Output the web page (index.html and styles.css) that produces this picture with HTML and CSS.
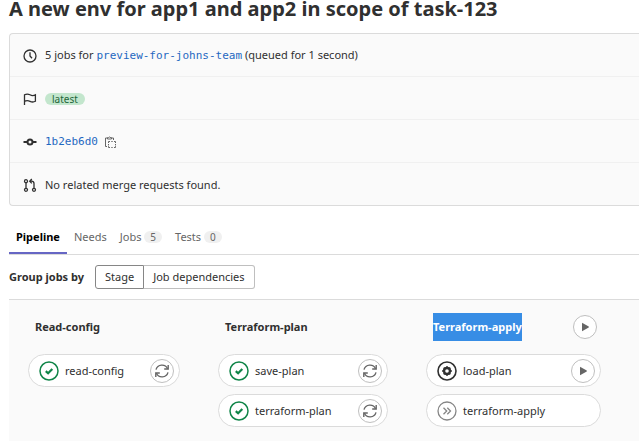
FILE: index.html
```html
<!DOCTYPE html>
<html lang="en">
<head>
  <meta charset="UTF-8">
  <meta name="viewport" content="width=device-width, initial-scale=1.0">
  <title>A new env for app1 and app2 in scope of task-123</title>
  <link rel="stylesheet" href="styles.css">
</head>
<body>
  <svg class="sprite" aria-hidden="true">
    <symbol id="check" viewBox="0 0 20 20">
      <circle cx="10" cy="10" r="9" fill="none" stroke="currentColor" stroke-width="1.5"/>
      <path d="M6.8 10.1l2.3 2.2 4.2-4.400" fill="none" stroke="currentColor" stroke-width="2.200"/>
    </symbol>
    <symbol id="manual" viewBox="0 0 20 20">
      <circle cx="10" cy="10" r="9" fill="none" stroke="currentColor" stroke-width="1.6"/>
      <circle cx="10" cy="10" r="3" fill="none" stroke="currentColor" stroke-width="2.4"/>
      <path d="M10 5.3v9.4M5.3 10h9.4M6.7 6.7l6.6 6.6M13.3 6.7l-6.6 6.6" stroke="currentColor" stroke-width="1.8"/>
      <circle cx="10" cy="10" r="1.8" fill="#fff"/>
    </symbol>
    <symbol id="skipped" viewBox="0 0 20 20">
      <circle cx="10" cy="10" r="9" fill="none" stroke="currentColor" stroke-width="1.3"/>
      <path d="M6.5 6.8l3.2 3.2-3.2 3.2M10.3 6.8l3.2 3.2-3.2 3.2" fill="none" stroke="currentColor" stroke-width="1.3"/>
    </symbol>
    <symbol id="retry" viewBox="0 0 14 14">
      <path d="M1 5.600A6.200 6.200 0 0 1 12.600 4.700M13 8.400A6.200 6.200 0 0 1 1.400 9.300" fill="none" stroke="currentColor" stroke-width="1.4"/>
      <path d="M13.200 1v4H9.200M.8 13V9h4" fill="none" stroke="currentColor" stroke-width="1.4"/>
    </symbol>
    <symbol id="play" viewBox="0 0 14 14">
      <path d="M4 3.200v7.600q0 .5.5.3l6.200-3.700q.5-.4 0-.8L4.500 2.900q-.5-.2-.5.3z" fill="currentColor"/>
    </symbol>
  </svg>

  <h1 class="title">A new env for app1 and app2 in scope of task-123</h1>

  <div class="info-box">
    <div class="info-row">
      <svg class="icon" viewBox="0 0 14 14"><circle cx="7" cy="7" r="6"/><path d="M7 3.200V7l2 2.300"/></svg>
      <span>5 jobs for <a class="mono" href="#">preview-for-johns-team</a> (queued for 1 second)</span>
    </div>
    <div class="info-row">
      <svg class="icon" viewBox="0 0 14 14"><path d="M1.500 13V2.800Q4.300 1.300 7 2.800T12.400 2.800V9.300Q9.800 10.700 7 9.300T1.500 9.300"/></svg>
      <span class="label">latest</span>
    </div>
    <div class="info-row">
      <svg class="icon thick" viewBox="0 0 14 14"><circle cx="7" cy="7" r="2.500"/><path d="M.5 7h4M9.500 7h4"/></svg>
      <a class="mono" href="#">1b2eb6d0</a>
      <button class="copy" type="button" aria-label="Copy commit SHA">
        <svg viewBox="0 0 12 12"><path d="M3 10.500H1.500V2H3M8 2h1.500v2M3.500 3V1.500h1q.8-1.200 1.600 0h1.400V3z"/><path d="M4.500 7V5.500H6M7.300 5.500h1.400M10 5.500h1.500V7M11.500 8v1.400M11.500 10.200v1.300H10M8.700 11.500H7.300M6 11.500H4.500v-1.300M4.500 9.400V8"/></svg>
      </button>
    </div>
    <div class="info-row">
      <svg class="icon" viewBox="0 0 14 14"><circle cx="3" cy="3.200" r="1.500"/><circle cx="3" cy="11.800" r="1.500"/><circle cx="11" cy="11.800" r="1.500"/><path d="M3 4.700v5.600M11 10.300V5.500Q11 3.200 8.500 3.200H7M8.800 1L6.700 3.200l2.100 2.200"/></svg>
      <span>No related merge requests found.</span>
    </div>
  </div>

  <nav class="tabs">
    <a class="tab active" href="#">Pipeline</a>
    <a class="tab" href="#">Needs</a>
    <a class="tab" href="#">Jobs <span class="badge">5</span></a>
    <a class="tab" href="#">Tests <span class="badge">0</span></a>
  </nav>

  <div class="group-by">
    <strong>Group jobs by</strong>
    <div class="btn-group">
      <button class="btn selected" type="button">Stage</button>
      <button class="btn" type="button">Job dependencies</button>
    </div>
  </div>

  <div class="graph">
    <section class="stage">
      <div class="stage-header"><h2>Read-config</h2></div>
      <div class="job">
        <svg class="status success"><use href="#check"/></svg>
        <span class="job-name">read-config</span>
        <button class="action" type="button" aria-label="Retry"><svg><use href="#retry"/></svg></button>
      </div>
    </section>
    <section class="stage">
      <div class="stage-header"><h2>Terraform-plan</h2></div>
      <div class="job">
        <svg class="status success"><use href="#check"/></svg>
        <span class="job-name">save-plan</span>
        <button class="action" type="button" aria-label="Retry"><svg><use href="#retry"/></svg></button>
      </div>
      <div class="job">
        <svg class="status success"><use href="#check"/></svg>
        <span class="job-name">terraform-plan</span>
        <button class="action" type="button" aria-label="Retry"><svg><use href="#retry"/></svg></button>
      </div>
    </section>
    <section class="stage">
      <div class="stage-header">
        <h2 class="highlight">Terraform-apply</h2>
        <button class="action" type="button" aria-label="Run all"><svg><use href="#play"/></svg></button>
      </div>
      <div class="job">
        <svg class="status manual"><use href="#manual"/></svg>
        <span class="job-name">load-plan</span>
        <button class="action" type="button" aria-label="Run"><svg><use href="#play"/></svg></button>
      </div>
      <div class="job">
        <svg class="status skipped"><use href="#skipped"/></svg>
        <span class="job-name">terraform-apply</span>
      </div>
    </section>
  </div>
</body>
</html>
```

FILE: styles.css
```css
* {
  box-sizing: border-box;
}
body {
  margin: 0;
  padding-left: 9px;
  font-family: "Noto Sans", sans-serif;
  font-size: 11px;
  line-height: 16px;
  color: #303030;
  background: #fff;
  overflow-x: hidden;
}
a {
  color: #1f68c1;
  text-decoration: none;
}
button {
  font: inherit;
  color: inherit;
  cursor: pointer;
}
.sprite {
  display: none;
}
.title {
  margin: 0 0 16px;
  font-size: 20px;
  line-height: 17px;
  white-space: nowrap;
}
.info-box {
  border: 1px solid #dbdbdb;
  border-right: 0;
  border-radius: 4px 0 0 4px;
  background: #fafafa;
}
.info-row {
  display: flex;
  align-items: center;
  height: 43px;
  padding: 1px 0 0 13px;
  border-bottom: 1px solid #f0f0f0;
}
.info-row:last-child {
  height: 42px;
  border-bottom: 0;
}
.icon {
  width: 14px;
  height: 14px;
  margin-right: 8px;
  fill: none;
  stroke: #303030;
  stroke-width: 1.3;
}
.icon.thick {
  stroke-width: 2;
}
.mono {
  font-family: "DejaVu Sans Mono", monospace;
}
.label {
  padding: 0 7px;
  border-radius: 6px;
  font-size: 10px;
  line-height: 12px;
  color: #24663b;
  background: #c3e6cd;
}
.copy {
  display: flex;
  margin-left: 6px;
  padding: 0;
  border: 0;
  background: none;
}
.copy svg {
  width: 12px;
  height: 12px;
  fill: none;
  stroke: #666;
}
.tabs {
  display: flex;
  gap: 1px;
  margin-top: 18px;
  border-bottom: 1px solid #dbdbdb;
}
.tab {
  padding: 5px 6px 7px;
  border-bottom: 2px solid transparent;
  color: #666;
}
.tab.active {
  padding: 5px 7px 7px;
  border-color: #6666c4;
  font-weight: bold;
  color: #000;
}
.badge {
  display: inline-block;
  padding: 0 6px;
  border-radius: 6px;
  font-size: 10px;
  line-height: 12px;
  background: #f0f0f0;
}
.group-by {
  display: flex;
  align-items: center;
  gap: 11px;
  padding: 10px 0;
}
.btn-group {
  display: flex;
}
.btn {
  height: 24px;
  padding: 0 9px;
  border: 1px solid #bfbfbf;
  border-left: 0;
  border-radius: 0 3px 3px 0;
  background: #fff;
}
.btn.selected {
  border: 1px solid #868686;
  border-radius: 3px 0 0 3px;
}
.graph {
  display: grid;
  grid-template-columns: 152px 170px 175px;
  gap: 38px;
  min-height: 142px;
  padding: 13px 0 13px 19px;
  border-top: 1px solid #dbdbdb;
  background: #fafafa;
}
.stage {
  display: flex;
  flex-direction: column;
  gap: 7px;
}
.stage-header {
  display: flex;
  align-items: center;
  justify-content: space-between;
  height: 28px;
  margin-bottom: 6px;
  padding: 0 4px 0 7px;
}
h2 {
  margin: 0;
  font-size: 11px;
  line-height: 28px;
}
.highlight {
  color: #fff;
  background: #378de5;
}
.job {
  display: flex;
  align-items: center;
  height: 33px;
  padding: 0 5px 0 10px;
  border: 1px solid #dbdbdb;
  border-radius: 17px;
  background: #fff;
}
.job-name {
  flex: 1;
  margin-left: 6px;
}
.status {
  width: 20px;
  height: 20px;
}
.success {
  color: #108548;
}
.manual {
  color: #303030;
}
.skipped {
  color: #868686;
}
.action {
  display: flex;
  align-items: center;
  justify-content: center;
  width: 24px;
  height: 24px;
  padding: 0;
  border: 1px solid #bfbfbf;
  border-radius: 50%;
  color: #666;
  background: #fff;
}
.action svg {
  width: 14px;
  height: 14px;
}
```
